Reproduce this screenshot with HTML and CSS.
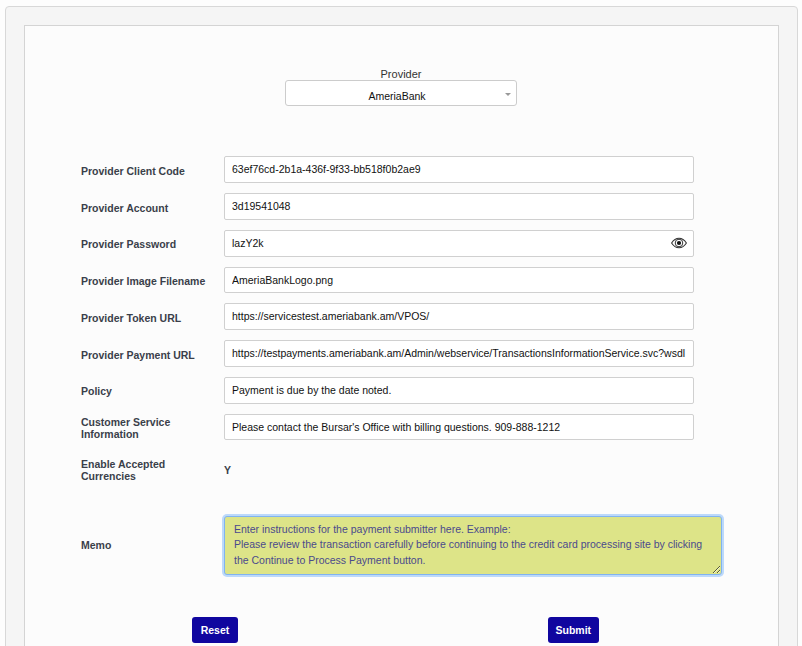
FILE: index.html
```html
<!DOCTYPE html>
<html lang="en">
<head>
    <meta charset="UTF-8">
    <title>Payment Provider Setup</title>
    <link rel="stylesheet" href="styles.css">
</head>
<body>
    <div class="outer-panel">
        <form class="inner-panel">
            <div class="provider-select">
                <label for="provider">Provider</label>
                <div class="select-box">
                    <select id="provider">
                        <option>AmeriaBank</option>
                    </select>
                </div>
            </div>

            <div class="fields">
                <label class="field-label" for="client-code">Provider Client Code</label>
                <input class="field-input" id="client-code" type="text" value="63ef76cd-2b1a-436f-9f33-bb518f0b2ae9">

                <label class="field-label" for="account">Provider Account</label>
                <input class="field-input" id="account" type="text" value="3d19541048">

                <label class="field-label" for="password">Provider Password</label>
                <div class="password-box">
                    <input class="field-input" id="password" type="text" value="lazY2k">
                    <svg class="eye-icon" viewBox="0 0 16 12" width="16" height="12" aria-hidden="true">
                        <path d="M0.6 6C2.6 2.8 5.2 1.2 8 1.2S13.4 2.8 15.4 6C13.4 9.2 10.8 10.8 8 10.8S2.6 9.2 0.6 6Z" fill="none" stroke="#333" stroke-width="1.1"/>
                        <circle cx="8" cy="6" r="3.8" fill="none" stroke="#333" stroke-width="1"/>
                        <circle cx="8" cy="6" r="2.1" fill="#111"/>
                    </svg>
                </div>

                <label class="field-label" for="image-file">Provider Image Filename</label>
                <input class="field-input" id="image-file" type="text" value="AmeriaBankLogo.png">

                <label class="field-label" for="token-url">Provider Token URL</label>
                <input class="field-input" id="token-url" type="text" value="https://servicestest.ameriabank.am/VPOS/">

                <label class="field-label" for="payment-url">Provider Payment URL</label>
                <input class="field-input" id="payment-url" type="text" value="https://testpayments.ameriabank.am/Admin/webservice/TransactionsInformationService.svc?wsdl">

                <label class="field-label" for="policy">Policy</label>
                <input class="field-input" id="policy" type="text" value="Payment is due by the date noted.">

                <label class="field-label" for="service-info">Customer Service Information</label>
                <input class="field-input" id="service-info" type="text" value="Please contact the Bursar's Office with billing questions. 909-888-1212">

                <span class="field-label currencies-label">Enable Accepted Currencies</span>
                <span class="field-value">Y</span>
            </div>

            <div class="memo-row">
                <label class="field-label memo-label" for="memo">Memo</label>
                <textarea class="memo-input" id="memo" rows="3">Enter instructions for the payment submitter here. Example:
Please review the transaction carefully before continuing to the credit card processing site by clicking the Continue to Process Payment button.</textarea>
            </div>

            <div class="actions">
                <button class="action-button" type="reset">Reset</button>
                <button class="action-button" type="button">Submit</button>
            </div>
        </form>
    </div>
</body>
</html>
```

FILE: styles.css
```css
html {
    height: 100%;
    overflow: hidden;
}
body {
    margin: 0;
    padding: 6px 4px 0 5px;
    background-color: #fdfdfd;
    font-family: "Liberation Sans", Arial, sans-serif;
    font-size: 12px;
    color: #333;
}
.outer-panel {
    height: 700px;
    padding: 18px 18px 0 18px;
    background-color: #f5f5f5;
    border: 1px solid #d8d8d8;
    border-radius: 4px;
}
.inner-panel {
    height: 100%;
    box-sizing: border-box;
    padding-top: 42px;
    background-color: #fcfcfc;
    border: 1px solid #d4d4d4;
}
.provider-select {
    display: flex;
    flex-direction: column;
    align-items: center;
    margin-right: 1px;
}
.provider-select label {
    font-size: 11px;
    line-height: 12px;
}
.select-box {
    position: relative;
    width: 232px;
    height: 26px;
}
.select-box::after {
    content: "";
    position: absolute;
    top: 13px;
    right: 6px;
    border-left: 3px solid transparent;
    border-right: 3px solid transparent;
    border-top: 3px solid #999;
}
.select-box select {
    width: 100%;
    height: 100%;
    box-sizing: border-box;
    padding: 5px 8px 0 0;
    appearance: none;
    background-color: #fff;
    border: 1px solid #ccc;
    border-radius: 3px;
    font-family: inherit;
    font-size: 10.5px;
    color: #111;
    text-align: center;
    text-align-last: center;
}
.fields {
    display: grid;
    grid-template-columns: 143px 470px;
    grid-auto-rows: 26.75px;
    row-gap: 10px;
    align-items: center;
    margin-top: 50.4px;
    padding-left: 56px;
}
.field-label {
    padding-top: 2px;
    padding-right: 10px;
    font-size: 10.5px;
    line-height: 12px;
    font-weight: bold;
    color: #3a3f4a;
}
.field-input {
    width: 100%;
    height: 26.75px;
    box-sizing: border-box;
    padding: 0 7px 1px 7px;
    background-color: #fff;
    border: 1px solid #d0d0d0;
    border-radius: 2px;
    font-family: inherit;
    font-size: 10.5px;
    color: #111;
}
.password-box {
    position: relative;
}
.eye-icon {
    position: absolute;
    top: 7px;
    right: 7px;
}
.currencies-label {
    margin-top: 11px;
}
.field-value {
    margin-top: 13px;
    font-size: 10.5px;
    font-weight: bold;
    color: #3a3f4a;
}
.memo-row {
    display: flex;
    align-items: center;
    margin-top: 38.6px;
    padding-left: 56px;
}
.memo-label {
    box-sizing: border-box;
    width: 143px;
    padding-top: 0;
}
.memo-input {
    width: 498px;
    height: 59px;
    box-sizing: border-box;
    padding: 5px 9px;
    background-color: #dde488;
    border: 1px solid #80b3f0;
    border-radius: 3px;
    box-shadow: 0 0 0 2px #bcd9fb;
    outline: none;
    font-family: inherit;
    font-size: 10.5px;
    line-height: 15.5px;
    color: #4a4a8c;
}
.actions {
    display: flex;
    gap: 310px;
    margin-top: 42px;
    padding-left: 167px;
}
.action-button {
    min-width: 46px;
    height: 26px;
    padding: 0 7.5px;
    background-color: #10069f;
    border: none;
    border-radius: 3px;
    font-family: inherit;
    font-size: 10.5px;
    font-weight: bold;
    color: #fff;
}
```
